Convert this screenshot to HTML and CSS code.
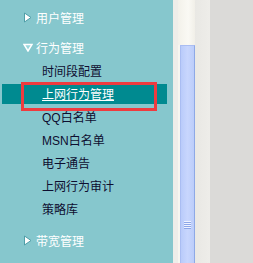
FILE: index.html
```html
<!DOCTYPE html>
<html lang="zh-CN">

<head>
  <meta charset="UTF-8">
  <meta name="viewport" content="width=device-width, initial-scale=1.0">
  <title>菜单</title>
  <link rel="stylesheet" href="styles.css">
</head>

<body>
  <div class="page">
    <nav class="menu">
      <div class="group">
        <div class="group-title">
          <svg class="arrow" width="10" height="11" viewBox="0 0 10 11"><polygon points="1.5,1 8,5.5 1.5,10" fill="#fff" stroke="#4f9ea8" stroke-width="1"/></svg>
          用户管理
        </div>
      </div>

      <div class="group open">
        <div class="group-title">
          <svg class="arrow" width="10" height="9" viewBox="0 0 10 9"><polygon points="1,1.5 9,1.5 5,8" fill="#9ad6dc" stroke="#fff" stroke-width="1.5"/></svg>
          行为管理
        </div>
        <ul class="items">
          <li>时间段配置</li>
          <li class="active"><a href="#">上网行为管理</a></li>
          <li>QQ白名单</li>
          <li>MSN白名单</li>
          <li>电子通告</li>
          <li>上网行为审计</li>
          <li>策略库</li>
        </ul>
      </div>

      <div class="group">
        <div class="group-title">
          <svg class="arrow" width="10" height="11" viewBox="0 0 10 11"><polygon points="1.5,1 8,5.5 1.5,10" fill="#fff" stroke="#4f9ea8" stroke-width="1"/></svg>
          带宽管理
        </div>
      </div>

      <!-- highlight mark around the selected item -->
      <div class="mark"></div>
    </nav>

    <div class="scrollbar">
      <div class="edge"></div>
      <div class="track">
        <div class="track-top"></div>
        <div class="thumb"><span class="grip"></span></div>
      </div>
    </div>
    <div class="strip"></div>
    <div class="rest"></div>
  </div>
</body>

</html>
```

FILE: styles.css
```css
body {
  margin: 0;
  padding: 0;
  font-family: 'Noto Sans CJK SC', 'Liberation Sans', sans-serif;
  font-size: 12px;
}

.page {
  display: flex;
  width: 253px;
  height: 263px;
  overflow: hidden;
}

.menu {
  position: relative;
  width: 173px;
  flex: none;
  background-color: #86c7cd;
  padding-top: 5px;
  box-sizing: border-box;
}

.group + .group {
  margin-top: 6px;
}

.group-title {
  display: flex;
  align-items: center;
  height: 24px;
  padding-left: 23px;
  color: #fff;
  gap: 3px;
}

.group-title .arrow {
  flex: none;
  width: 10px;
}

.items {
  list-style: none;
  margin: 2px 0 0 0;
  padding: 0;
}

.items li {
  height: 23px;
  line-height: 23px;
  padding-left: 42px;
  color: #0e0e30;
  font-family: 'Liberation Sans', 'Noto Sans CJK SC', sans-serif;
}

.items li.active {
  padding-left: 0;
}

.items li.active a {
  display: block;
  margin-left: 2px;
  width: 165px;
  height: 20px;
  line-height: 22px;
  padding-left: 40px;
  box-sizing: border-box;
  background-color: #008a90;
  color: #fff;
  text-decoration: underline;
}

.mark {
  position: absolute;
  left: 21px;
  top: 82px;
  width: 136px;
  height: 29px;
  border: 3px solid #ef3b3f;
  box-sizing: border-box;
}

.scrollbar {
  display: flex;
  width: 22px;
  flex: none;
}

.edge {
  width: 5px;
  background-color: #eeede9;
}

.track {
  display: flex;
  flex-direction: column;
  width: 17px;
  background-color: #f7f6f0;
}

.track-top {
  height: 45px;
  background: linear-gradient(to right, #f3f1ea, #faf9f4 60%, #f1efe8);
}

.thumb {
  flex: 1;
  margin-left: 2px;
  width: 15px;
  box-sizing: border-box;
  border-left: 1px solid #aabdf2;
  border-right: 1px solid #8ea9e6;
  border-top: 1px solid #aabdf2;
  background: linear-gradient(to right, #b9cbfa, #c8d6fd 50%, #bccdfa);
  display: flex;
  justify-content: center;
  padding-top: 175px;
}

.grip {
  display: block;
  width: 7px;
  height: 8px;
  background: repeating-linear-gradient(to bottom, #eef2ff 0, #eef2ff 1px, #8ca6e8 1px, #8ca6e8 2px);
}

.strip {
  width: 15px;
  flex: none;
  background: linear-gradient(to right, #e9e8e4, #eeede9);
}

.rest {
  flex: 1;
  background-color: #dbdad8;
}
```
